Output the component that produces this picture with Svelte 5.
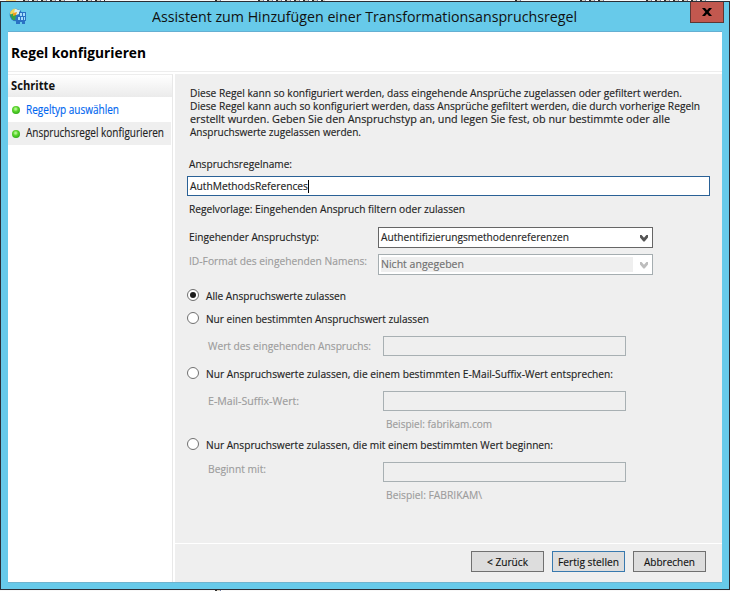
<script>
  const intro = [
    ['Diese Regel kann so konfiguriert werden, dass eingehende Ansprüche zugelassen oder gefiltert werden.', 492],
    ['Diese Regel kann auch so konfiguriert werden, dass Ansprüche gefiltert werden, die durch vorherige Regeln', 510],
    ['erstellt wurden. Geben Sie den Anspruchstyp an, und legen Sie fest, ob nur bestimmte oder alle', 480],
    ['Anspruchswerte zugelassen werden.', 171]
  ];

  const steps = [
    { text: 'Regeltyp auswählen', width: 93, link: true },
    { text: 'Anspruchsregel konfigurieren', width: 138, current: true }
  ];

  const buttons = [
    { text: '< Zurück', width: 41 },
    { text: 'Fertig stellen', width: 61, primary: true },
    { text: 'Abbrechen', width: 51 }
  ];

  // Condenses a label so that it spans the given width.
  function fit(node, width) {
    const natural = node.getBoundingClientRect().width;
    node.style.transform = `scaleX(${width / natural})`;
    node.style.width = width + 'px';
  }
</script>

{#snippet label(text, width)}<span class="t" use:fit={width}>{text}</span>{/snippet}

{#snippet chevron()}
  <svg class="chevron" width="8" height="7" viewBox="0 0 8 7">
    <path d="M0 0h1.6L4 2.8 6.4 0H8v2.6L4.6 6.6H3.4L0 2.6z" fill="currentColor" />
  </svg>
{/snippet}

<div class="screen">
  <div class="behind">
    <i style="left:6px;width:10px;background:#ffe08a"></i>
    <i class="ink" style="left:23px;width:43px"></i>
    <i class="ink" style="left:77px;width:28px"></i>
    <i class="ink" style="left:215px;width:7px"></i>
    <i class="ink" style="left:258px;width:67px"></i>
    <i class="ink" style="left:515px;width:6px"></i>
    <i class="ink" style="left:580px;width:26px"></i>
    <i class="ink" style="left:646px;width:60px"></i>
  </div>
  <div class="window">
    <header class="titlebar">
      <svg class="appicon" width="18" height="18" viewBox="0 0 18 18">
        <circle cx="7" cy="7" r="6.3" fill="#2d78bd" />
        <path d="M1 6C1 2 5 0 8 1L7 4 3 7z" fill="#f4d65b" />
        <path d="M6 1l5 1-1 4-3 1-2-2z" fill="#d8f0f4" />
        <path d="M1 7l4-2 2 2-1 5H4z" fill="#36a247" />
        <path d="M4 5l4-1-1 3-3 1z" fill="#f3a01f" />
        <path d="M10 4h7v9h-1v3h-3v-2h-2v2H7v-4h1V7h2z" fill="#2a72c4" />
        <path d="M11 5h2v3h-2zM14 5h2v3h-2zM9 9h2v3H9zM12 9h2v3h-2zM15 9h1v3h-1z" fill="#a5dcfa" />
      </svg>
      <h1>{@render label('Assistent zum Hinzufügen einer Transformationsanspruchsregel', 425)}</h1>
      <button class="close" aria-label="Schließen">
        <svg width="10" height="8" viewBox="0 0 10 8"><path d="M0 0h3l2 2.3L7 0h3L6.6 4 10 8H7L5 5.7 3 8H0l3.4-4z" fill="#000" /></svg>
      </button>
    </header>

    <div class="client">
      <div class="heading">{@render label('Regel konfigurieren', 135)}</div>
      <div class="body">
        <nav>
          <div class="navhead">{@render label('Schritte', 44)}</div>
          {#each steps as s}
            <div class="step" class:link={s.link} class:current={s.current}>
              <span class="dot"></span>{@render label(s.text, s.width)}
            </div>
          {/each}
        </nav>

        <main>
          <div class="form">
            <div class="intro">
              {#each intro as [text, width]}<div>{@render label(text, width)}</div>{/each}
            </div>
            <div class="line namelabel">{@render label('Anspruchsregelname:', 103)}</div>
            <div class="name">{@render label('AuthMethodsReferences', 118)}<span class="caret"></span></div>
            <div class="line template">{@render label('Regelvorlage: Eingehenden Anspruch filtern oder zulassen', 276)}</div>

            <div class="row type">
              <div class="rowlabel strong">{@render label('Eingehender Anspruchstyp:', 130)}</div>
              <div class="select">{@render label('Authentifizierungsmethodenreferenzen', 188)}{@render chevron()}</div>
            </div>
            <div class="row format">
              <div class="rowlabel raised">{@render label('ID-Format des eingehenden Namens:', 178)}</div>
              <div class="select disabled"><div class="value">{@render label('Nicht angegeben', 83)}</div>{@render chevron()}</div>
            </div>

            <div class="radio first"><span class="ring on"></span>{@render label('Alle Anspruchswerte zulassen', 140)}</div>
            <div class="radio second"><span class="ring"></span>{@render label('Nur einen bestimmten Anspruchswert zulassen', 223)}</div>
            <div class="field">
              <div class="fieldlabel">{@render label('Wert des eingehenden Anspruchs:', 163)}</div>
              <div class="box"></div>
            </div>

            <div class="radio third"><span class="ring"></span>{@render label('Nur Anspruchswerte zulassen, die einem bestimmten E-Mail-Suffix-Wert entsprechen:', 407)}</div>
            <div class="field">
              <div class="fieldlabel">{@render label('E-Mail-Suffix-Wert:', 91)}</div>
              <div class="box"></div>
            </div>
            <div class="hint">{@render label('Beispiel: fabrikam.com', 106)}</div>

            <div class="radio fourth"><span class="ring"></span>{@render label('Nur Anspruchswerte zulassen, die mit einem bestimmten Wert beginnen:', 347)}</div>
            <div class="field">
              <div class="fieldlabel raised">{@render label('Beginnt mit:', 58)}</div>
              <div class="box"></div>
            </div>
            <div class="hint">{@render label('Beispiel: FABRIKAM\\', 96)}</div>
          </div>

          <footer>
            {#each buttons as b}
              <button class="btn" class:primary={b.primary}>{@render label(b.text, b.width)}</button>
            {/each}
          </footer>
        </main>
      </div>
    </div>
  </div>
  <div class="below"><i class="ink" style="left:215px;width:7px"></i></div>
</div>

<style>
  :global(body) { margin: 0; overflow: hidden; }
  .screen {
    width: 730px; height: 591px; background: #fff; overflow: hidden;
    font: 11px/13px "Open Sans", "Noto Sans", sans-serif; color: #222;
    -webkit-text-stroke: 0.15px currentColor;
  }
  .screen, .screen * { box-sizing: border-box; }
  .t { white-space: pre; display: inline-block; flex: none; transform-origin: 0 50%; text-align: left; }
  .behind, .below { height: 1px; position: relative; background: #f8f8f8; }
  .behind i, .below i { position: absolute; top: 0; height: 1px; }
  .ink { background: repeating-linear-gradient(90deg, #333 0 2px, #dcd5c6 2px 5px, #6d7da6 5px 6px, #fff 6px 9px); }
  .window {
    height: 589px; background: #67caea; border: 1px solid #2b2e36;
    padding: 0 7px 7px; display: flex; flex-direction: column;
  }
  .titlebar { height: 30px; flex: none; display: flex; position: relative; border-bottom: 1px solid #65afd2; }
  .appicon { margin: 6px 0 0 1px; }
  h1 { margin: 0 0 0 125px; font-size: 15px; font-weight: 400; line-height: 28px; color: #111; height: 28px; -webkit-text-stroke: 0; }
  .close {
    position: absolute; right: -2px; top: 0; width: 34px; height: 21px; padding: 0;
    background: #c2584f; border: 1px solid #5d3734; border-top: 0;
    display: flex; align-items: center; justify-content: center;
  }
  .client { flex: 1; background: #fff; display: flex; flex-direction: column; box-shadow: 0 1px #6fb4cf; }
  .heading {
    height: 40px; flex: none; border-bottom: 1px solid #ededed; padding-left: 3px;
    font-size: 14px; font-weight: 700; line-height: 41px; color: #000; -webkit-text-stroke: 0;
  }
  .body { flex: 1; display: flex; gap: 2px; padding-top: 2px; }
  nav { width: 165px; border-top: 1px solid #ededed; border-right: 1px solid #e8e8e8; }
  .navhead {
    height: 22px; padding-left: 3px; font-size: 12px; font-weight: 700; line-height: 22px; color: #111;
    background: linear-gradient(#fff, #ebebeb); -webkit-text-stroke: 0;
  }
  .step { height: 23px; width: 163px; display: flex; align-items: center; padding-left: 4px; font-size: 12px; line-height: 22px; }
  .step.link { color: #0066f0; margin: 1px 0; }
  .step.current { background: #efefef; }
  .step.current .t { margin-top: -2px; }
  .dot {
    width: 8px; height: 8px; border-radius: 50%; margin: 1px 6px 0 0; flex: none;
    background: radial-gradient(circle at 45% 38%, #b0f590 0 12%, #5fd62f 35%, #2fae18 75%);
  }
  .step.current .dot { margin-top: 0; }
  main { flex: 1; background: #efefef; display: flex; flex-direction: column; }
  .form { height: 469px; padding: 12px 12px 0; }
  .intro { padding-left: 3px; }
  .intro div, .line { height: 13px; display: flex; }
  .line { padding-left: 2px; }
  .namelabel { margin-top: 19px; }
  .name {
    margin-top: 6px; height: 20px; border: 1px solid #2a6196; background: #fff;
    padding-left: 2px; display: flex; align-items: center; line-height: 18px;
  }
  .caret { width: 1px; height: 13px; background: #000; }
  .template { margin-top: 6px; }
  .row { display: flex; padding-left: 2px; }
  .type { margin-top: 12px; }
  .format { margin-top: 6px; }
  .rowlabel { width: 189px; line-height: 20px; }
  .strong, .radio { font-weight: 500; }
  .rowlabel.raised { line-height: 14px; color: #9c9c9c; }
  .select {
    width: 275px; height: 21px; border: 1px solid #666; background: #fff; color: #262626;
    padding: 0 4px 0 2px; display: flex; justify-content: space-between; line-height: 18px;
  }
  .chevron { margin-top: 7px; color: #555; flex: none; }
  .disabled { border-color: #a5adb0; color: #707070; }
  .disabled .value { width: 252px; height: 15px; margin-top: 2px; background: #efefef; line-height: 14px; }
  .disabled .chevron { color: #bdbdbd; }
  .radio { height: 14px; display: flex; line-height: 14px; }
  .ring {
    width: 12px; height: 12px; border: 1px solid #707070; border-radius: 50%; background: #fff;
    margin-right: 7px; flex: none; display: flex; align-items: center; justify-content: center;
  }
  .ring.on::after { content: ""; width: 6px; height: 6px; border-radius: 50%; background: #1c1c1c; }
  .first { margin-top: 14px; }
  .second { margin-top: 9px; }
  .third { margin-top: 11px; }
  .fourth { margin-top: 8px; }
  .field { display: flex; margin-top: 10px; padding-left: 21px; }
  .fieldlabel { width: 175px; line-height: 20px; color: #9c9c9c; }
  .fieldlabel.raised { line-height: 14px; }
  .box { width: 243px; height: 20px; border: 1px solid #a8b0b3; }
  .hint { margin-top: 6px; padding-left: 199px; height: 13px; display: flex; color: #9c9c9c; }
  footer { border-top: 1px solid #fff; flex: 1; padding: 7px 16px 0 0; display: flex; justify-content: flex-end; gap: 8px; }
  .btn {
    width: 73px; height: 21px; border: 1px solid #707070; background: #ddd; padding: 0;
    font: 500 11px/18px "Open Sans", "Noto Sans", sans-serif; color: #111;
    display: flex; align-items: center; justify-content: center;
  }
  .primary { border-color: #3879ae; }
</style>
